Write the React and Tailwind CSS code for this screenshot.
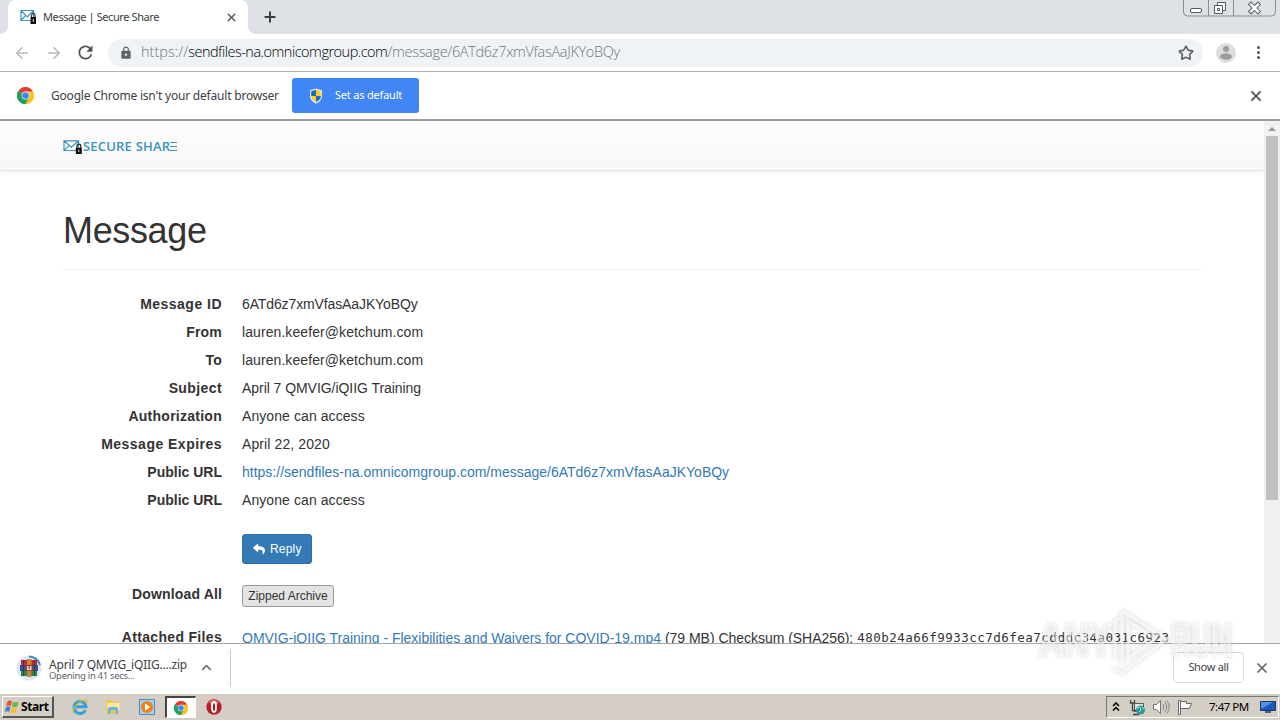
import { ArrowLeft, ArrowRight, ChevronUp, Plus, Star, X } from "lucide-react";
import { FaReply } from "react-icons/fa";
import { MdRefresh, MdLock } from "react-icons/md";

const details = [
  { label: "Message ID", labelClass: "tracking-[0.48px]", value: "6ATd6z7xmVfasAaJKYoBQy", valueClass: "tracking-[-0.12px]" },
  { label: "From", labelClass: "tracking-[0.2px]", value: "lauren.keefer@ketchum.com", valueClass: "tracking-[0.08px]" },
  { label: "To", labelClass: "tracking-[0.2px]", value: "lauren.keefer@ketchum.com", valueClass: "tracking-[0.08px]" },
  { label: "Subject", labelClass: "tracking-[0.4px]", value: "April 7 QMVIG/iQIIG Training", valueClass: "tracking-[-0.05px]" },
  { label: "Authorization", labelClass: "tracking-[0.26px]", value: "Anyone can access", valueClass: "tracking-[0.08px]" },
  { label: "Message Expires", labelClass: "tracking-[0.48px]", value: "April 22, 2020", valueClass: "tracking-[0.1px]" },
  {
    label: "Public URL",
    labelClass: "tracking-[0px]",
    value: "https://sendfiles-na.omnicomgroup.com/message/6ATd6z7xmVfasAaJKYoBQy",
    valueClass: "tracking-[0px] text-[#337ab7]",
  },
  { label: "Public URL", labelClass: "tracking-[0px]", value: "Anyone can access", valueClass: "tracking-[0.08px]" },
];

const ChromeLogo = ({ className }) => (
  <svg viewBox="0 0 48 48" className={className}>
    <path d="M24 24 L3.2 12 A24 24 0 0 1 44.8 12 Z" fill="#e33b2e" />
    <path d="M24 24 L44.8 12 A24 24 0 0 1 24 48 Z" fill="#fcc31e" />
    <path d="M24 24 L24 48 A24 24 0 0 1 3.2 12 Z" fill="#1fa15a" />
    <path d="M24 13 H45.3 A24 24 0 0 1 24 48 L33.5 29.5 Z" fill="#fcc31e" />
    <path d="M3.2 12 L14.5 29.5 L24 35 L33.5 29.5 L24 48 A24 24 0 0 1 3.2 12 Z" fill="#1fa15a" />
    <circle cx="24" cy="24" r="11" fill="#fff" />
    <circle cx="24" cy="24" r="9.5" fill="#4285f4" />
  </svg>
);

const MailLock = ({ className }) => (
  <svg viewBox="0 0 20 16" className={className} fill="none">
    <path d="M1 1.8h14.5v9.7H1z M1.3 2l7 6.2L15.2 2 M1.3 11.2l4.4-4.4" stroke="#3a94bd" strokeWidth="1.2" />
    <path d="M14 9V7a1.900 1.900 0 0 1 3.800 0V9" stroke="#222" strokeWidth="1.2" />
    <path d="M12.800 8.800h6V15h-6z" fill="#111" />
    <path d="M15.300 10.500h1v2.500h-1z" fill="#ddd" />
  </svg>
);

// Taller variant of the same mark, used as the tab favicon
const Favicon = () => (
  <svg viewBox="0 0 17 16" className="h-4 w-[17px]" fill="none">
    <path d="M1 1.500h12.500v10H1z M1.500 2l5.800 6L13 2 M1.500 11l3.500-4" stroke="#3a94bd" strokeWidth="1.200" />
    <path d="M11.500 8V6.500a1.800 1.800 0 0 1 3.600 0V8" stroke="#333" strokeWidth="1.200" />
    <path d="M10.500 8h5.500v7h-5.500z" fill="#111" />
    <path d="M12.800 10h1v3h-1z" fill="#ddd" />
  </svg>
);

const Shield = () => (
  <svg viewBox="0 0 16 16" className="h-4 w-4">
    <path d="M8 .5 14 2.3V8c0 3.5-2.5 6-6 7.5C4.500 14 2 11.500 2 8V2.300z" fill="#dce6ee" />
    <path d="M8 2v6H3.200V3.300z M8 8h4.800c0 2.800-1.800 4.600-4.800 6z" fill="#1d67c8" />
    <path d="M8 2v6h4.800V3.300z M8 8H3.200c0 2.800 1.800 4.600 4.800 6z" fill="#fbcf24" />
  </svg>
);

const TabStrip = () => (
  <div className="flex h-[34px] items-start bg-[#dee1e6]">
    <div className="flex h-full w-2 items-end bg-white">
      <div className="h-full w-2 rounded-br-lg bg-[#dee1e6]" />
    </div>
    <div className="bg-[#dee1e6]">
      <div className="flex h-[34px] w-60 items-center rounded-t-lg bg-white pl-3">
        <Favicon />
        <span className="ml-[6px] text-[11px] tracking-[-0.4px] whitespace-nowrap text-[#3c4043]">Message | Secure Share</span>
        <X size={13} strokeWidth={3} className="mr-[10px] ml-auto text-[#5f6368]" />
      </div>
    </div>
    <div className="h-full w-2 bg-white">
      <div className="h-full w-2 rounded-bl-lg bg-[#dee1e6]" />
    </div>
    <Plus size={16} strokeWidth={3} className="mt-[9px] ml-[6px] text-[#3c4043]" />
    <svg viewBox="0 0 94 18" className="mr-[3px] ml-auto h-[18px] w-[94px]" fill="none">
      <path d="M.5 0v12q0 4 4 4h84q4 0 4-4V0 M25.500 0v16 M50.500 0v16" stroke="#888c94" />
      <rect x="7.500" y="8.500" width="11" height="4" rx="1.500" fill="#fff" stroke="#555a63" />
      <path d="M34.500 2.500h8v8h-8z" fill="#fff" stroke="#555a63" />
      <path d="M31.500 5.500h8v8h-8z M34.500 8.500h2v2h-2z" fill="#fff" stroke="#555a63" />
      <path d="m68 4.500 7 7m0-7-7 7" stroke="#555a63" strokeWidth="4.500" strokeLinecap="square" />
      <path d="m68 4.500 7 7m0-7-7 7" stroke="#fff" strokeWidth="2.500" strokeLinecap="square" />
    </svg>
  </div>
);

const Toolbar = () => (
  <div className="flex h-[38px] items-center border-b border-[#aeb0b2] bg-white">
    <ArrowLeft size={18} strokeWidth={2.300} className="ml-[13px] text-[#b8babd]" />
    <ArrowRight size={18} strokeWidth={2.300} className="ml-[14px] text-[#b8babd]" />
    <MdRefresh size={21} className="ml-[12px] text-[#505458]" />
    <div className="ml-[12px] flex h-7 w-[1095px] items-center rounded-full bg-[#f0f3f6] pl-[11px]">
      <MdLock size={14} className="text-[#5f6368]" />
      <span className="ml-2 pb-px font-['Open_Sans','Noto_Sans',sans-serif] text-[14.500px] font-light whitespace-nowrap text-[#70757a]">
        <span className="tracking-[0.02px]">https://</span>
        <span className="tracking-[-0.5px] text-black">sendfiles-na.omnicomgroup.com</span>
        <span className="tracking-[-0.32px]">/message/6ATd6z7xmVfasAaJKYoBQy</span>
      </span>
      <Star size={16} strokeWidth={2.500} className="mr-[9px] ml-auto text-[#5f6368]" />
    </div>
    <svg viewBox="0 0 20 20" className="ml-[13px] h-5 w-5">
      <circle cx="10" cy="10" r="10" fill="#dedede" />
      <circle cx="10" cy="6" r="3" fill="#9c9c9c" />
      <ellipse cx="10" cy="13.500" rx="6" ry="3.200" fill="#9c9c9c" />
    </svg>
    <div className="ml-[21px] flex flex-col gap-[2px]">
      <span className="h-[3px] w-[3px] rounded-full bg-[#505458]" />
      <span className="h-[3px] w-[3px] rounded-full bg-[#505458]" />
      <span className="h-[3px] w-[3px] rounded-full bg-[#505458]" />
    </div>
  </div>
);

const DefaultBrowserBar = () => (
  <div className="flex h-[47px] items-center bg-white">
    <ChromeLogo className="ml-[17px] h-[17px] w-[17px]" />
    <span className="ml-[17px] w-[241px] text-[12px] tracking-[-0.2px] whitespace-nowrap text-[#3c4043]">
      Google Chrome isn't your default browser
    </span>
    <button className="flex h-[35px] w-[127px] items-center rounded-[3px] bg-[#4285f4] pl-4 text-white">
      <Shield />
      <span className="ml-[11px] text-[11px] tracking-[-0.2px] whitespace-nowrap">Set as default</span>
    </button>
    <X size={16} strokeWidth={3} className="mr-4 ml-auto text-[#5f6368]" />
  </div>
);

const Message = () => (
  <div className="min-w-0 flex-1 overflow-hidden bg-white font-['Liberation_Sans',Arial,sans-serif] text-[14px] text-[#333]">
    <div className="flex h-[50px] items-center border-b border-[#e5e5e5] bg-linear-to-b from-[#fdfdfd] to-[#f7f7f7] pl-[63px] shadow-[0_1px_5px_rgba(0,0,0,0.08)]">
      <MailLock className="mt-[2px] h-[16px] w-[20px]" />
      <span className="mt-[2px] font-['Open_Sans',sans-serif] text-[13px] font-semibold tracking-[0.2px] whitespace-nowrap text-[#3a94bd]">
        SECURE SHAR
      </span>
      <span className="mt-[2px] flex flex-col gap-[3px]">
        <span className="h-px w-[7px] bg-[#3a94bd]" />
        <span className="h-px w-[7px] bg-[#3a94bd]" />
        <span className="h-px w-[7px] bg-[#3a94bd]" />
      </span>
    </div>
    <div className="ml-[62px] w-[1140px] whitespace-nowrap">
      <h1 className="h-[99px] border-b border-[#eee] pt-[40px] pl-px text-[36px] leading-[40px] tracking-[-0.35px]">Message</h1>
      <div className="mt-[20px]">
        {details.map((row, index) => (
          <div key={index} className="flex h-7 items-center">
            <div className="w-40 text-right font-bold">
              <span className={row.labelClass}>{row.label}</span>
            </div>
            <div className="ml-5">
              <span className={row.valueClass}>{row.value}</span>
            </div>
          </div>
        ))}
      </div>
      <button className="mt-5 ml-[180px] flex h-[30px] w-[70px] items-center rounded-[3px] border border-[#2e6da4] bg-[#337ab7] pl-[10px] text-white">
        <FaReply size={12} />
        <span className="ml-[5px] text-[12px] tracking-[0.2px]">Reply</span>
      </button>
      <div className="mt-[21px] flex h-[22px] items-center">
        <div className="w-40 pb-[4px] text-right font-bold tracking-[0.15px]">Download All</div>
        <button className="ml-5 h-[22px] w-[92px] rounded-[3px] border border-[#999] bg-[#e4e4e4] text-[12px] tracking-[0px] text-[#333]">
          Zipped Archive
        </button>
      </div>
      <div className="mt-[20px] flex h-[22px] items-center">
        <div className="w-40 pb-[2px] text-right font-bold tracking-[0.32px]">Attached Files</div>
        <div className="ml-5 flex items-center">
          <span className="tracking-[-0.01px] text-[#337ab7]">QMVIG-iQIIG Training - Flexibilities and Waivers for COVID-19.mp4</span>
          <span className="ml-1 tracking-[-0.03px]">(79 MB) Checksum (SHA256):</span>
          <span className="ml-1 font-['DejaVu_Sans_Mono',monospace] text-[12.500px] tracking-[0.48px]">
            480b24a66f9933cc7d6fea7cdddc34a031c6923
          </span>
        </div>
      </div>
    </div>
  </div>
);

const ScrollBar = () => (
  <div className="flex w-4 flex-col items-center bg-[#f1f1f1]">
    <svg viewBox="0 0 16 15" className="h-[15px] w-4">
      <path d="M4 10h8L8 6z" fill="#999" />
    </svg>
    <div className="h-[364px] w-3 bg-[#c1c1c1]" />
  </div>
);

const WinRar = () => (
  <svg viewBox="0 0 26 26" className="h-[26px] w-[26px]">
    <circle cx="13" cy="13" r="12.500" fill="#dbe6f6" />
    <path d="M13 1.500A11.500 11.500 0 0 1 24 10" fill="none" stroke="#4285c4" strokeWidth="2" />
    <path d="M5 5h16v5.500H5z" fill="#b92b36" />
    <path d="M4 10.500h18v5H4z" fill="#37548f" />
    <path d="M5 15.500h16V21H5z" fill="#31834e" />
    <path d="M11 4h4.500v18H11z" fill="#c78332" />
    <path d="M4 10.500h18M4 15.500h18M7.500 5v16M18.500 5v16" stroke="#293046" strokeWidth=".7" />
    <path d="M10.500 10.500h5.500v5h-5.500z" fill="#e7dfc9" stroke="#c42a2a" />
    <path d="M13.200 10v4" stroke="#333" />
  </svg>
);

const DownloadShelf = () => (
  <div className="flex h-[50px] items-center border-t border-[#a5a5a5] bg-white pb-[2px]">
    <div className="flex h-[38px] w-[231px] items-center border-r border-[#ccc] pl-4">
      <WinRar />
      <div className="mt-[3px] ml-[7px] w-[138px] whitespace-nowrap">
        <div className="text-[12px] leading-[13px] tracking-[-0.2px] text-[#3c4043]">April 7 QMVIG_iQIIG....zip</div>
        <div className="text-[9.500px] leading-[10px] tracking-[-0.3px] text-[#5f6368]">Opening in 41 secs...</div>
      </div>
      <ChevronUp size={15} strokeWidth={2.800} className="ml-[12px] text-[#777]" />
    </div>
    <button className="mr-[10px] ml-auto h-[31px] w-[71px] rounded-[4px] border border-[#dadce0] text-[11px] tracking-[-0.3px] text-[#3c4043]">
      Show all
    </button>
    <X size={16} strokeWidth={2.600} className="mr-[10px] text-[#666]" />
  </div>
);

const WindowsFlag = () => (
  <svg viewBox="0 0 16 16" className="h-4 w-4">
    <path d="M3.500 2.500Q6 .8 8 2.300L6.800 7Q4.500 5.800 2.200 7.200z" fill="#e5532b" />
    <path d="M9 2.800q2.500 1.300 5.500 0L13.200 7.500q-3 1.200-5.300 0z" fill="#6db43c" />
    <path d="M2 8.200q2.300-1.400 4.500-.2L5.300 12.700Q3 11.500.7 13z" fill="#3b82d0" />
    <path d="M7.600 8.600q2.400 1.200 5.300 0l-1.300 4.800q-2.800 1.200-5.200 0z" fill="#f7bd29" />
  </svg>
);

const Taskbar = () => (
  <div className="flex h-[27px] items-center border-t border-white bg-[#d5cec6]">
    <button className="ml-[2px] flex h-[22px] w-[52px] items-center border-t border-r-2 border-b-2 border-l border-t-white border-r-[#555] border-b-[#555] border-l-white pl-px text-black">
      <WindowsFlag />
      <span className="ml-[1px] text-[12px] font-bold tracking-[-0.4px]">Start</span>
    </button>
    <svg viewBox="0 0 18 18" className="ml-[17px] h-[18px] w-[18px]" fill="none">
      <path d="M14.500 12A6 6 0 1 1 15 8.800H5" stroke="#369ed9" strokeWidth="3" />
      <path d="M2.500 15.500C-1 13 9 1 15.500 2q2 .8-.5 4" stroke="#e4b931" strokeWidth="1.200" />
    </svg>
    <svg viewBox="0 0 18 18" className="ml-[15px] h-[18px] w-[18px]">
      <path d="M2 2h6l1 2h6v12H2z" fill="#ecc84d" />
      <path d="M3.500 5h12v7h-12z" fill="#fae9a0" />
      <path d="M4 10q5-2.500 10 0v6h-2.500v-4h-5v4H4z" fill="#63b5dd" />
    </svg>
    <svg viewBox="0 0 18 18" className="ml-4 h-[18px] w-[18px]">
      <path d="M1.500 1.500h15v15h-15z" fill="#a8d1ef" stroke="#4c88bb" />
      <circle cx="9" cy="9" r="6" fill="#ef8119" />
      <path d="m7 5.500 5.500 3.500L7 12.500z" fill="#fff" />
    </svg>
    <div className="ml-[9px] flex h-[22px] w-[31px] items-center justify-center border-t-2 border-r border-b border-l-2 border-t-[#444] border-r-white border-b-white border-l-[#444] bg-white">
      <ChromeLogo className="h-[14px] w-[14px]" />
    </div>
    <svg viewBox="0 0 16 16" className="ml-[10px] h-4 w-4">
      <circle cx="8" cy="8" r="7.700" fill="#bd1e22" />
      <path d="M3 3q5-4 10 0l-2 3H5z" fill="#e17070" />
      <ellipse cx="8" cy="8" rx="2" ry="5" fill="#a91318" stroke="#fff" strokeWidth="1.900" />
    </svg>
    <div className="mr-px ml-auto flex h-[22px] w-[173px] items-center border border-t-[#777] border-r-white border-b-white border-l-[#777]">
      <svg viewBox="0 0 8 10" className="ml-[5px] h-[10px] w-2" fill="none" stroke="#000" strokeWidth="1.500">
        <path d="m1 4 3-3 3 3M1 8.500l3-3 3 3" />
      </svg>
      <svg viewBox="0 0 17 17" className="ml-[9px] h-[17px] w-[17px]" fill="none">
        <path d="M5.500 4.500h9v8h-9z" fill="#dce6e4" stroke="#555" />
        <path d="M1.500 1v3h4V1M3.500 4v7.500h4M4 15.500h6" stroke="#444" strokeWidth="1.300" />
        <circle cx="11.500" cy="11" r="4.500" fill="#2c9998" />
        <path d="m8 9 3-1 1 3-2 2m3-5 2 2" stroke="#9be0c9" />
      </svg>
      <svg viewBox="0 0 18 16" className="ml-[6px] h-4 w-[18px]" fill="none">
        <path d="M1.500 5.500h3l4-4v13l-4-4h-3z" fill="#fff" stroke="#777" />
        <path d="M11 5q2 3 0 6m2-8q3.500 5 0 10m2-11.500q4.500 6.500 0 13" stroke="#888" />
      </svg>
      <svg viewBox="0 0 17 16" className="ml-[6px] h-4 w-[17px]">
        <path d="M2.500 1.500h2v14h-2z M4.500 2.500h6v2h5l-2 5h-9z" fill="#fff" stroke="#666" />
      </svg>
      <span className="ml-[16px] text-[11.500px] tracking-[-0.5px] whitespace-nowrap text-black">7:47 PM</span>
      <svg viewBox="0 0 16 14" className="mr-[2px] ml-auto h-[14px] w-4">
        <path d="M.5 1.500h15v9H.5z" fill="#1b58b9" stroke="#1b3769" />
        <path d="M1 2h12L3 8H1z" fill="#5292df" />
        <path d="M5 11h6v2H5z" fill="#526477" />
      </svg>
    </div>
  </div>
);

const Watermark = () => (
  <svg
    viewBox="0 0 200 74"
    className="pointer-events-none absolute top-[603px] left-[1036px] h-[74px] w-[200px] drop-shadow-[0_0_2px_rgba(0,0,0,0.28)]"
    fill="none"
    stroke="#fff"
    strokeOpacity="0.6"
    strokeLinejoin="round"
  >
    <g fill="#fff" fillOpacity="0.45" strokeWidth="1.200" fontFamily="'Liberation Sans', Arial, sans-serif" fontSize="46" fontWeight="bold">
      <text x="3" y="53" textLength="73" lengthAdjust="spacingAndGlyphs">ANY</text>
      <text x="135" y="53" textLength="61" lengthAdjust="spacingAndGlyphs">RUN</text>
    </g>
    <path d="M79 56V18l6-3 M86 61V8l45 28-45 34-9-5" strokeWidth="3" />
    <path d="M92 18 119 36 92 55z" strokeWidth="3" />
  </svg>
);

export default function App() {
  return (
    <div className="relative flex h-[720px] w-[1280px] flex-col overflow-hidden bg-white font-['Noto_Sans',Tahoma,sans-serif]">
      <TabStrip />
      <Toolbar />
      <DefaultBrowserBar />
      <div className="flex min-h-0 flex-1 border-t-2 border-[#9b9b9b]">
        <Message />
        <ScrollBar />
      </div>
      <DownloadShelf />
      <Taskbar />
      <Watermark />
    </div>
  );
}
